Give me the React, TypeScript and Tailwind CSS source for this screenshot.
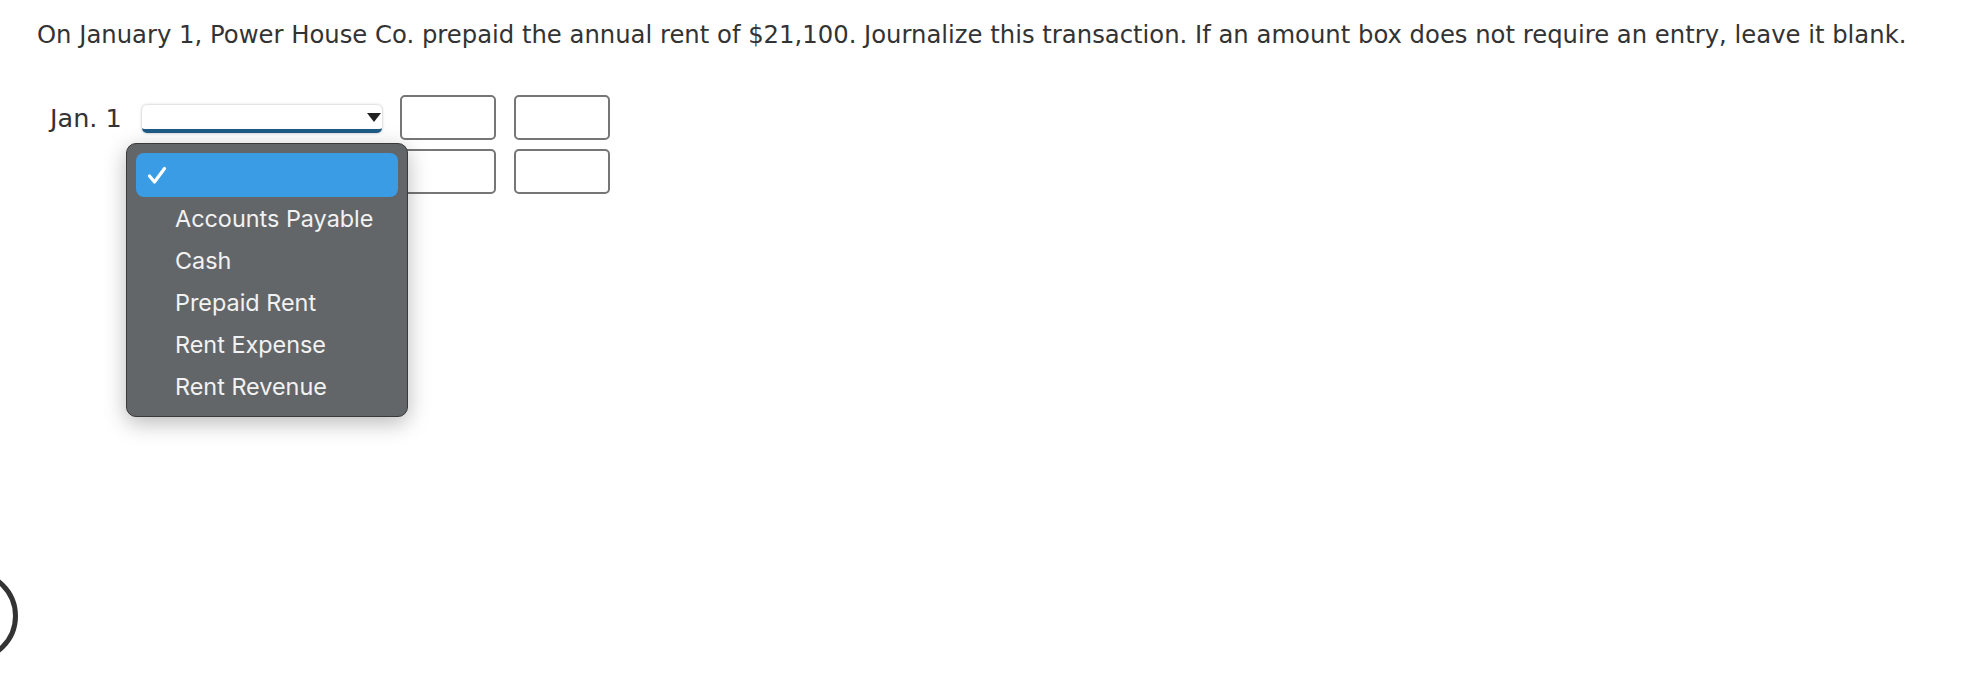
import { useState } from 'react';

const accounts = ['Accounts Payable', 'Cash', 'Prepaid Rent', 'Rent Expense', 'Rent Revenue'];

function AmountBox() {
  return <input type="text" className="h-[45px] w-[96px] rounded-[5px] border-2 border-[#767676] bg-white outline-none" />;
}

function AccountMenu() {
  return (
    <div className="absolute left-[-16px] top-[38px] z-10 w-[282px] rounded-[10px] border border-[#3a3a3a] bg-[#636669] px-[9px] pb-[8px] pt-[9px] shadow-[0_6px_22px_rgba(0,0,0,0.28)] font-['Inter',sans-serif]">
      <div className="flex h-[44px] items-center rounded-[8px] bg-[#3b9ce6] pl-[11px]">
        <svg width="20" height="19" viewBox="0 0 20 19" fill="none">
          <path d="M2.5 10 L7.5 16 L17.5 2.5" stroke="white" strokeWidth="3.2" strokeLinecap="round" strokeLinejoin="round" />
        </svg>
      </div>
      <ul className="mt-[1px]">
        {accounts.map((a) => (
          <li key={a} className="flex h-[42px] items-center pl-[39px] text-[23.4px] text-[#f2f2f2]">
            {a}
          </li>
        ))}
      </ul>
    </div>
  );
}

export default function App() {
  const [open] = useState(true);

  return (
    <div className="relative min-h-[677px] overflow-hidden bg-white font-['DejaVu_Sans',sans-serif] text-[#333]">
      <p className="pl-[37px] pt-[20px] text-[24.3px] leading-[30px]">
        On January 1, Power House Co. prepaid the annual rent of $21,100. Journalize this transaction. If an amount box does not require an entry, leave it blank.
      </p>

      <div className="mt-[45px] flex items-start pl-[50px]">
        <span className="mt-[8px] w-[92px] text-[25.5px] leading-[30px]">Jan. 1</span>
        <div className="relative mt-[10px] w-[240px]">
          <div className="flex h-[28px] items-center justify-end rounded-[5px] border-b-[4px] border-[#1d5b86] bg-white pr-[1px] shadow-[0_0_3px_rgba(0,0,0,0.3)]">
            <svg width="14" height="9" viewBox="0 0 14 9">
              <path d="M0 0 H14 L7 9 Z" fill="#222" />
            </svg>
          </div>
          {open && <AccountMenu />}
        </div>
        <div className="ml-[18px] grid grid-cols-[96px_96px] gap-x-[18px] gap-y-[9px]">
          <AmountBox />
          <AmountBox />
          <AmountBox />
          <AmountBox />
        </div>
      </div>

      <div className="absolute left-[-74px] top-[570px] h-[92px] w-[92px] rounded-full border-[5px] border-[#333]" />
    </div>
  );
}
